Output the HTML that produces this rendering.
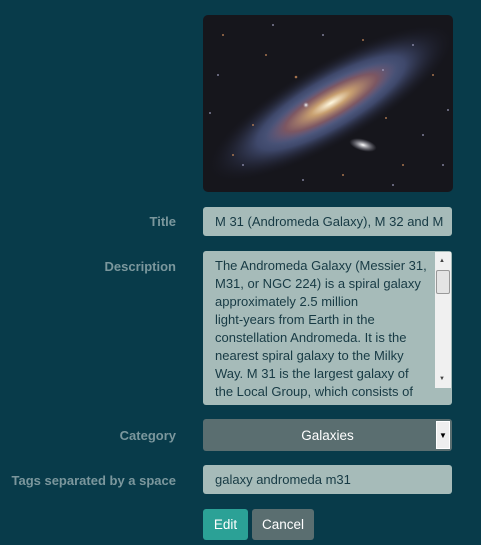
<!DOCTYPE html>
<html><head><style>
body{margin:0;width:481px;height:545px;background:#083b4a;font-family:"Liberation Sans",sans-serif;position:relative;overflow:hidden}
.lbl{position:absolute;right:305px;font-weight:bold;font-size:13px;color:#7b979d;text-align:right;white-space:nowrap}
.box{position:absolute;left:203px;width:249px;background:#a6bbb9;border-radius:3px;color:#173a44;font-size:13px}
</style></head><body>
<svg style="position:absolute;left:203px;top:15px;border-radius:5px" width="250" height="177" viewBox="0 0 250 177">
<defs>
<radialGradient id="h" cx="0.5" cy="0.5" r="0.5"><stop offset="0" stop-color="#a0b0e0" stop-opacity=".9"/><stop offset=".6" stop-color="#5a6aa0" stop-opacity=".6"/><stop offset="1" stop-color="#1a1a2a" stop-opacity="0"/></radialGradient>
<radialGradient id="c" cx="0.5" cy="0.5" r="0.5"><stop offset="0" stop-color="#fff8e0"/><stop offset=".3" stop-color="#c8a070"/><stop offset=".7" stop-color="#8a5050" stop-opacity=".7"/><stop offset="1" stop-color="#6a4a6a" stop-opacity="0"/></radialGradient>
<radialGradient id="s" cx="0.5" cy="0.5" r="0.5"><stop offset="0" stop-color="#fff"/><stop offset="1" stop-color="#aab" stop-opacity="0"/></radialGradient>
</defs>
<rect width="250" height="177" fill="#16161c"/>
<g transform="translate(128,88) rotate(-30)">
<ellipse rx="140" ry="40" fill="url(#h)"/>
<ellipse rx="75" ry="19" fill="url(#c)"/>
</g>
<ellipse cx="160" cy="130" rx="14" ry="6" fill="url(#s)" transform="rotate(15 160 130)"/>
<circle cx="103" cy="90" r="3" fill="url(#s)"/>
<g fill="#c88a5a" opacity=".8"><circle cx="93" cy="62" r="1.3"/><circle cx="20" cy="20" r="1"/><circle cx="63" cy="40" r="1"/><circle cx="183" cy="103" r="1"/><circle cx="50" cy="110" r="1"/><circle cx="230" cy="60" r="1"/><circle cx="140" cy="160" r="1"/><circle cx="30" cy="140" r="1"/><circle cx="200" cy="150" r="1"/><circle cx="160" cy="25" r="1"/></g>
<g fill="#aac" opacity=".7"><circle cx="7" cy="98" r="1"/><circle cx="40" cy="150" r="1"/><circle cx="210" cy="30" r="1"/><circle cx="240" cy="150" r="1"/><circle cx="120" cy="20" r="1"/><circle cx="190" cy="170" r="1"/><circle cx="70" cy="10" r="1"/><circle cx="220" cy="120" r="1"/><circle cx="15" cy="60" r="1"/><circle cx="100" cy="165" r="1"/><circle cx="245" cy="95" r="1"/><circle cx="180" cy="55" r="1"/></g>
</svg>
<div class="lbl" style="top:214px">Title</div>
<div class="box" style="top:207px;height:29px;line-height:29px;padding-left:12px;width:237px;white-space:nowrap;overflow:hidden">M 31 (Andromeda Galaxy), M 32 and M</div>
<div class="lbl" style="top:259px">Description</div>
<div class="box" style="top:251px;height:154px;overflow:hidden">
<div style="position:absolute;left:12px;top:6px;width:225px;line-height:18px;white-space:nowrap">The Andromeda Galaxy (Messier 31,<br>M31, or NGC 224) is a spiral galaxy<br>approximately 2.5 million<br>light-years from Earth in the<br>constellation Andromeda. It is the<br>nearest spiral galaxy to the Milky<br>Way. M 31 is the largest galaxy of<br>the Local Group, which consists of</div>
<div style="position:absolute;left:232px;top:1px;width:16px;height:136px;background:#f0f0f0">
<div style="position:absolute;left:1px;top:18px;width:12px;height:22px;border:1px solid #999;background:#e4e4e4;border-radius:2px"></div>
<div style="position:absolute;left:4px;top:6px;font-size:6px;color:#444">▲</div>
<div style="position:absolute;left:4px;top:124px;font-size:6px;color:#444">▼</div>
</div>
</div>
<div class="lbl" style="top:428px">Category</div>
<div style="position:absolute;left:203px;top:419px;width:249px;height:32px;background:#5a6e70;border-radius:3px;color:#fff;font-size:13.5px;line-height:33px;text-align:center">Galaxies
<div style="position:absolute;left:233px;top:2px;width:14px;height:28px;background:#eee;border:1px solid #fff;box-sizing:border-box;color:#000;font-size:8px;line-height:28px">▼</div></div>
<div class="lbl" style="top:473px">Tags separated by a space</div>
<div class="box" style="top:465px;height:29px;line-height:29px;padding-left:12px;width:237px">galaxy andromeda m31</div>
<div style="position:absolute;left:203px;top:509px;width:45px;height:31px;background:#2ba196;border-radius:3px;color:#fff;font-size:13.5px;line-height:31px;text-align:center">Edit</div>
<div style="position:absolute;left:252px;top:509px;width:62px;height:31px;background:#5a6e70;border-radius:3px;color:#fff;font-size:13.5px;line-height:31px;text-align:center">Cancel</div>
</body></html>
